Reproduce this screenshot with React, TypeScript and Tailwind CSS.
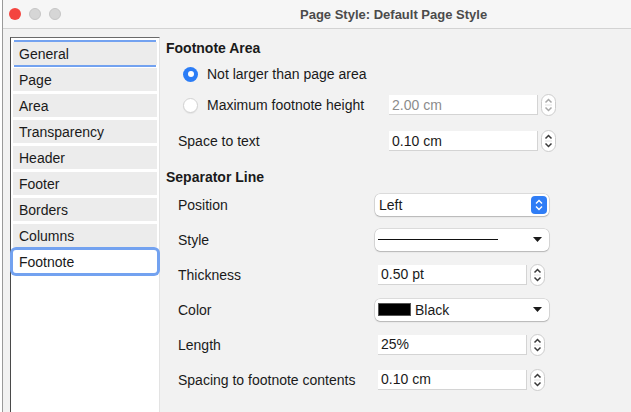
import React from 'react';

const pages = ['General', 'Page', 'Area', 'Transparency', 'Header', 'Footer', 'Borders', 'Columns', 'Footnote'];

function Spinner({ disabled }: { disabled?: boolean }) {
  const c = disabled ? '#a8a8a8' : '#3a3a3a';
  return (
    <div className="ml-[3px] flex h-[22px] w-[15px] flex-col items-center justify-center rounded-full border border-[#cdcdcd] bg-white">
      <svg width="9" height="18" viewBox="0 0 9 18">
        <path d="M1.5 6.5 L4.5 3.5 L7.5 6.5" fill="none" stroke={c} strokeWidth="1.5" />
        <line x1="1" y1="9" x2="8" y2="9" stroke="#e2e2e2" strokeWidth="1" />
        <path d="M1.5 11.5 L4.5 14.5 L7.5 11.5" fill="none" stroke={c} strokeWidth="1.5" />
      </svg>
    </div>
  );
}

function SpinField({ value, disabled, offset }: { value: string; disabled?: boolean; offset?: boolean }) {
  return (
    <div className={`flex items-center ${offset ? 'ml-[3px]' : ''}`}>
      <div
        className={`flex h-[20px] w-[149px] items-center border-r border-b border-[#d4d4d4] bg-white pl-[3px] pt-[1px] ${
          disabled ? 'text-[#8c8c8c]' : 'text-[#1a1a1a]'
        }`}
      >
        {value}
      </div>
      <Spinner disabled={disabled} />
    </div>
  );
}

function Arrow() {
  return (
    <svg width="9" height="5" viewBox="0 0 9 5" className="ml-auto mr-[7px]">
      <path d="M0 0 L9 0 L4.5 5 Z" fill="#1a1a1a" />
    </svg>
  );
}

function Dropdown({ children }: { children: React.ReactNode }) {
  return (
    <div className="flex h-[22px] w-[174px] items-center rounded-[5px] bg-white pl-[3px] shadow-[0_0_0_0.5px_rgba(0,0,0,0.18),0_1px_1.5px_rgba(0,0,0,0.18)]">
      {children}
    </div>
  );
}

function Radio({ checked }: { checked?: boolean }) {
  return checked ? (
    <div className="flex h-[15px] w-[15px] shrink-0 items-center justify-center rounded-full bg-[#2c7df6]">
      <div className="h-[6px] w-[6px] rounded-full bg-white" />
    </div>
  ) : (
    <div className="h-[15px] w-[15px] shrink-0 rounded-full border border-[#d2d2d2] bg-white shadow-[0_1px_1px_rgba(0,0,0,0.06)]" />
  );
}

function SepRow({ label, children }: { label: string; children: React.ReactNode }) {
  return (
    <div className="flex h-[35px] items-center">
      <div className="w-[209px] pl-[12px] pt-[1px]">{label}</div>
      {children}
    </div>
  );
}

export default function App() {
  return (
    <div
      className="flex h-[412px] w-[631px] overflow-hidden bg-white text-[14px] leading-[17px] text-[#1a1a1a]"
      style={{ fontFamily: '"Liberation Sans", Arial, sans-serif' }}
    >
      {/* edge of what lies behind */}
      <div className="w-[3px] border-r border-[#9a9a9a] bg-white" />

      <div className="flex flex-1 flex-col rounded-tl-[8px] bg-[#f2f2f2]">
        {/* Title bar */}
        <div className="relative flex h-[29px] items-center border-b border-[#d3d3d3] bg-[#f6f6f6]">
          <div className="flex gap-[8px] pl-[6px]">
            <div className="h-[12px] w-[12px] rounded-full bg-[#f4453f]" />
            <div className="h-[12px] w-[12px] rounded-full border border-[#c6c6c6] bg-[#d6d6d6]" />
            <div className="h-[12px] w-[12px] rounded-full border border-[#c6c6c6] bg-[#d6d6d6]" />
          </div>
          <div className="absolute left-[297px] top-[6px] text-[13px] font-bold text-[#4b4b4b]">
            Page Style: Default Page Style
          </div>
        </div>

        <div className="flex flex-1 pl-[7px] pt-[8px]">
          {/* Page list */}
          <div className="w-[150px] border-t border-l border-r border-t-[#6a6a6a] border-l-[#4a4a4a] border-r-[#e3e3e3] bg-white pl-[2px] pr-[2px] pt-[4px]">
            {pages.map((p) => {
              if (p === 'Footnote') {
                return (
                  <div
                    key={p}
                    className="mb-[3px] flex h-[23px] items-center rounded-[3px] bg-white pl-[6px] pt-[1px] shadow-[0_0_0_3px_#73a2f0]"
                  >
                    {p}
                  </div>
                );
              }
              return (
                <div
                  key={p}
                  className={`mb-[3px] flex h-[23px] items-center bg-[#ececec] pl-[6px] pt-[1px] ${
                    p === 'General' ? 'shadow-[0_-3px_0_-1px_#73a2f0,0_3px_0_-1px_#73a2f0]' : ''
                  }`}
                >
                  {p}
                </div>
              );
            })}
          </div>

          {/* Footnote settings */}
          <div className="flex-1 pl-[6px]">
            <div className="flex h-[22px] items-center pt-[1px] font-bold">Footnote Area</div>

            <div className="flex h-[30px] items-center pl-[17px]">
              <Radio checked />
              <span className="ml-[9px] pt-[1px]">Not larger than page area</span>
            </div>

            <div className="flex h-[32px] items-center">
              <div className="flex w-[223px] items-center pl-[17px]">
                <Radio />
                <span className="ml-[9px] pt-[1px]">Maximum footnote height</span>
              </div>
              <SpinField value="2.00 cm" disabled />
            </div>

            <div className="flex h-[40px] items-center">
              <div className="w-[223px] pl-[12px] pt-[1px]">Space to text</div>
              <SpinField value="0.10 cm" />
            </div>

            <div className="mt-[5px] flex h-[21px] items-center pt-[1px] font-bold">Separator Line</div>

            <SepRow label="Position">
              <Dropdown>
                <span className="pl-[1px] pt-[1px]">Left</span>
                <div className="ml-auto mr-[2px] flex h-[18px] w-[16px] items-center justify-center rounded-[4px] bg-[#2f7df6]">
                  <svg width="8" height="12" viewBox="0 0 8 12">
                    <path d="M1 4.5 L4 1.5 L7 4.5" fill="none" stroke="white" strokeWidth="1.4" />
                    <path d="M1 7.5 L4 10.5 L7 7.5" fill="none" stroke="white" strokeWidth="1.4" />
                  </svg>
                </div>
              </Dropdown>
            </SepRow>

            <SepRow label="Style">
              <Dropdown>
                <div className="h-[1.5px] w-[120px] bg-[#111]" />
                <Arrow />
              </Dropdown>
            </SepRow>

            <SepRow label="Thickness">
              <SpinField value="0.50 pt" offset />
            </SepRow>

            <SepRow label="Color">
              <Dropdown>
                <div className="h-[13px] w-[33px] border border-[#555] bg-black" />
                <span className="ml-[4px] pt-[1px]">Black</span>
                <Arrow />
              </Dropdown>
            </SepRow>

            <SepRow label="Length">
              <SpinField value="25%" offset />
            </SepRow>

            <SepRow label="Spacing to footnote contents">
              <SpinField value="0.10 cm" offset />
            </SepRow>
          </div>
        </div>
      </div>
    </div>
  );
}
